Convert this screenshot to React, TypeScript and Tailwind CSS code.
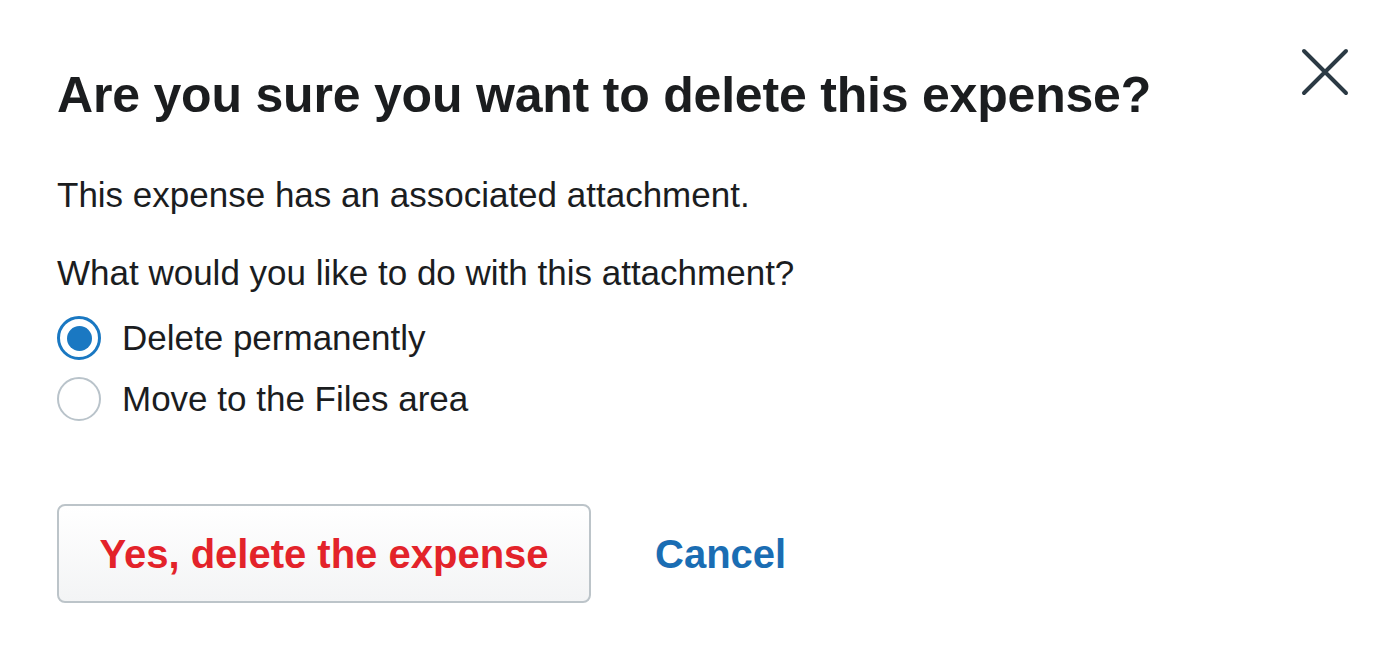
import React from "react";

export default function App() {
  return (
    <div
      className="w-[1390px] h-[660px] bg-white relative text-[#1b1d1f]"
      style={{ fontFamily: '"Liberation Sans", Arial, Helvetica, sans-serif' }}
    >
      <button className="absolute left-[1301px] top-[48px] w-[48px] h-[48px] flex items-center justify-center">
        <svg width="48" height="48" viewBox="0 0 48 48">
          <path d="M3 3 L45 45 M45 3 L3 45" stroke="#2b3a44" strokeWidth="4" strokeLinecap="round" />
        </svg>
      </button>
      <div className="pl-[57px] pt-[68px] flex flex-col">
        <h1 className="text-[50px] leading-[54px] font-bold tracking-[-0.2px]">
          Are you sure you want to delete this expense?
        </h1>
        <p className="mt-[48px] text-[35px] leading-[50px]">This expense has an associated attachment.</p>
        <p className="mt-[28px] text-[35px] leading-[50px]">What would you like to do with this attachment?</p>
        <div className="mt-[15px] flex flex-col gap-[11px]">
          <label className="flex items-center gap-[21px] h-[50px]">
            <span className="w-[44px] h-[44px] rounded-full border-[3px] border-[#1a78c2] flex items-center justify-center">
              <span className="w-[25px] h-[25px] rounded-full bg-[#1a78c2]" />
            </span>
            <span className="text-[35px]">Delete permanently</span>
          </label>
          <label className="flex items-center gap-[21px] h-[50px]">
            <span className="w-[44px] h-[44px] rounded-full border-[2px] border-[#b9c3ca]" />
            <span className="text-[35px]">Move to the Files area</span>
          </label>
        </div>
        <div className="mt-[80px] flex items-center gap-[64px]">
          <button className="w-[534px] h-[99px] rounded-[8px] border-[2px] border-[#bcc4c9] bg-gradient-to-b from-white to-[#f3f4f5] text-[#e3232a] text-[40px] font-bold">
            Yes, delete the expense
          </button>
          <button className="text-[#1a6db3] text-[40px] font-bold">Cancel</button>
        </div>
      </div>
    </div>
  );
}
